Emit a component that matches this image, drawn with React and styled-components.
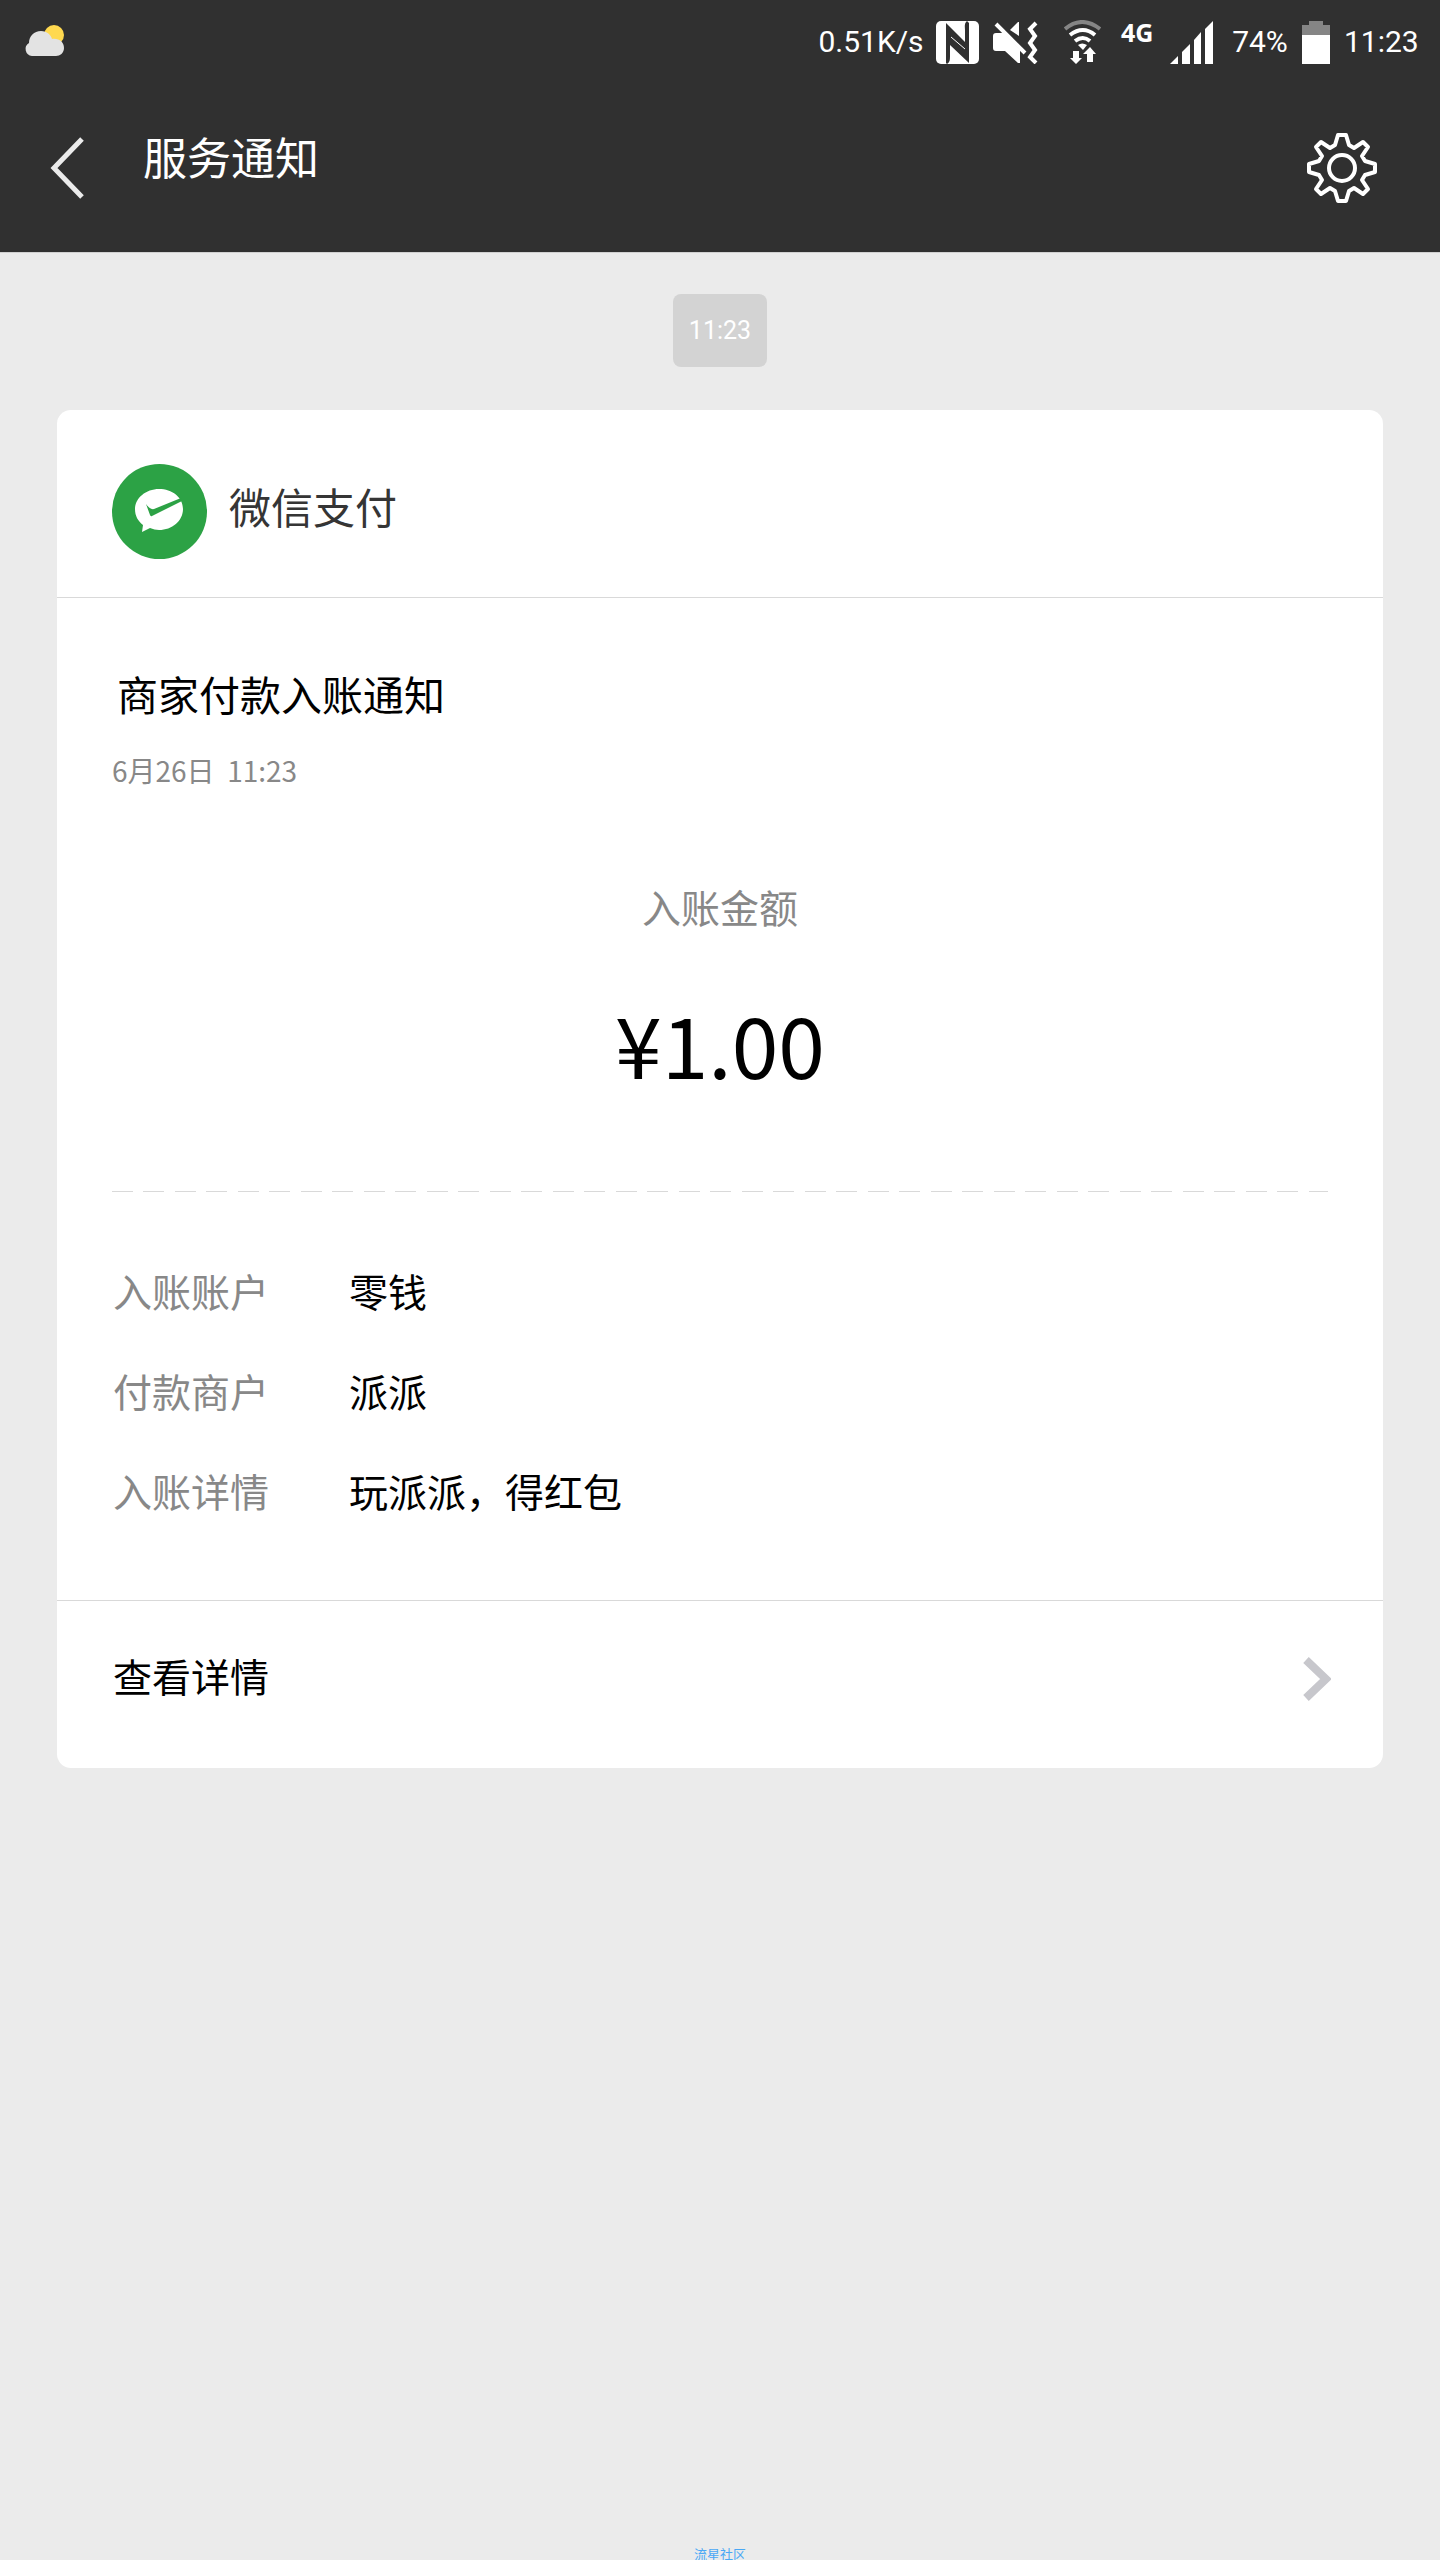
import React from "react";
import styled, { createGlobalStyle } from "styled-components";

const GlobalStyle = createGlobalStyle`
  * {
    box-sizing: border-box;
  }

  body {
    margin: 0;
    background: #ebebeb;
    font-family: "Noto Sans CJK SC", sans-serif;
  }
`;

const Page = styled.div`
  display: flex;
  flex-direction: column;
  min-height: 100vh;
`;

const Header = styled.header`
  background: #303030;
  color: #ffffff;
  border-bottom: 1px solid #d0d0d0;
`;

// Status bar
const StatusBar = styled.div`
  display: flex;
  justify-content: space-between;
  align-items: center;
  height: 84px;
  padding: 0 22px 0 24px;
`;

const StatusGroup = styled.div`
  display: flex;
  align-items: center;
`;

const StatusText = styled.span`
  width: ${({ $width }) => $width}px;
  margin-left: ${({ $gap }) => $gap || 0}px;
  font-family: Roboto, sans-serif;
  font-size: 30px;
  line-height: 44px;
  text-align: center;
  white-space: nowrap;
`;

const NetworkType = styled.span`
  width: 34px;
  height: 44px;
  margin: 0 15px 0 20px;
  font-family: "Noto Sans", sans-serif;
  font-size: 25px;
  font-weight: 700;
  line-height: 24px;
`;

const StatusIcon = styled.svg`
  display: block;
  flex: none;
  margin-left: ${({ $gap }) => $gap || 0}px;
`;

// Navigation bar
const NavBar = styled.div`
  display: flex;
  align-items: center;
  height: 168px;
  padding: 0 60px 0 48px;
`;

const IconButton = styled.button`
  display: flex;
  padding: 0;
  border: none;
  background: none;
  color: #ffffff;
  cursor: pointer;
`;

const PageTitle = styled.h1`
  flex: 1;
  margin: 0;
  padding: 0 0 24px 55px;
  font-size: 44px;
  font-weight: 400;
  line-height: 60px;
`;

// Messages
const Messages = styled.main`
  display: flex;
  flex-direction: column;
  align-items: center;
  padding: 41px 57px;
`;

const TimeChip = styled.time`
  padding: 0 16px;
  border-radius: 8px;
  background: #d3d3d3;
  color: #ffffff;
  font-family: Roboto, sans-serif;
  font-size: 25px;
  line-height: 73px;
  text-align: center;
`;

const Card = styled.article`
  width: 100%;
  margin-top: 43px;
  border-radius: 14px;
  background: #ffffff;
  color: #000000;
`;

const CardHeader = styled.div`
  display: flex;
  align-items: center;
  gap: 22px;
  height: 188px;
  padding: 16px 55px 0;
  border-bottom: 1px solid #d9d9d9;
`;

const Sender = styled.span`
  padding-bottom: 12px;
  color: #353535;
  font-size: 42px;
  line-height: 60px;
`;

const CardBody = styled.div`
  padding: 65px 55px 80px;
`;

const CardTitle = styled.h2`
  margin: 0;
  padding-left: 5px;
  font-size: 41px;
  font-weight: 400;
  line-height: 60px;
`;

const CardDate = styled.time`
  display: block;
  margin-top: 22px;
  color: #888888;
  font-size: 28px;
  line-height: 50px;
  white-space: pre;
`;

const AmountLabel = styled.div`
  margin-top: 81px;
  color: #888888;
  font-size: 39px;
  line-height: 60px;
  text-align: center;
`;

const Amount = styled.div`
  margin-top: 47px;
  font-size: 84px;
  line-height: 120px;
  text-align: center;
`;

const DashedLine = styled.div`
  height: 1px;
  margin-top: 88px;
  background: repeating-linear-gradient(
    to right,
    #d9d9d9 0 21px,
    transparent 21px 31px,
    #d9d9d9 31px 52px,
    transparent 52px 63px
  );
`;

const Details = styled.dl`
  display: grid;
  grid-template-columns: 236px 1fr;
  row-gap: 40px;
  margin: 68px 0 0;
  padding-left: 1px;
  font-size: 39px;
  line-height: 60px;

  dt {
    color: #888888;
  }

  dd {
    margin: 0;
  }
`;

const CardLink = styled.a`
  display: flex;
  justify-content: space-between;
  align-items: center;
  height: 168px;
  padding: 0 52px 12px 56px;
  border-top: 1px solid #d9d9d9;
  color: #000000;
  font-size: 39px;
  line-height: 60px;
  text-decoration: none;

  span {
    padding-bottom: 8px;
  }
`;

const Footer = styled.footer`
  margin-top: auto;
  color: #4aa8f5;
  font-size: 13px;
  line-height: 13px;
  text-align: center;
`;

const WeatherIcon = () => (
  <StatusIcon width="42" height="36" viewBox="0 0 42 36">
    <circle cx="30" cy="11" r="10" fill="#ffd94f" />
    <path
      d="M8 32a7 7 0 0 1-3-13C5 12 10 7 17 7c6 0 10 4 11 8 7-1 12 3 12 9 0 5-4 8-8 8z"
      fill="#e3e3e3"
    />
  </StatusIcon>
);

const NfcIcon = () => (
  <StatusIcon $gap={11} width="43" height="43" viewBox="0 0 43 43">
    <rect width="43" height="43" rx="5" fill="#fff" />
    <path
      d="M10 2l19 19V9c0-4-1-6 2-9l2 2v40L14 24v10c0 5 0 7-3 9l-1-1z"
      fill="#303030"
    />
    <path d="M15 16l14 12" fill="none" stroke="#fff" strokeWidth="1" />
  </StatusIcon>
);

const MuteIcon = () => (
  <StatusIcon $gap={14} width="45" height="43" viewBox="0 0 45 43">
    <path d="M0 15q0-3 3-3h7l17 17v13h-2L12 30H3q-3 0-3-3zM26 1v14l-9-6 8-8z" fill="#fff" />
    <path d="M3 3l29 29" fill="none" stroke="#fff" strokeWidth="4" />
    <path d="M43 2l-6 6 5 7-5 7 5 7-5 7 6 6" fill="none" stroke="#fff" strokeWidth="4" />
  </StatusIcon>
);

const WifiIcon = () => (
  <StatusIcon $gap={26} width="37" height="44" viewBox="0 0 37 44">
    <g fill="none" stroke="#fff" strokeWidth="4">
      <path d="M1 9q17-14 35 0" stroke="#858585" />
      <path d="M6 15q13-10 25 0" />
      <path d="M11 21q8-6 15 0" />
    </g>
    <path d="M14 25q4-3 9 0l-4 5z" fill="#fff" />
    <path d="M9 31h6v7h3l-6 6-6-6h3zM23 42h6v-8h3l-6-7-7 7h4z" fill="#fff" />
  </StatusIcon>
);

const SignalIcon = () => (
  <StatusIcon width="43" height="43" viewBox="0 0 43 43" fill="#fff">
    <path d="M0 43l8-8v8zM12 43V31l8-8v20zM24 43V19l7-8v32zM35 43V8l8-8v43z" />
  </StatusIcon>
);

const BatteryIcon = () => (
  <StatusIcon $gap={11} width="28" height="43" viewBox="0 0 28 43">
    <path d="M0 14V4h7V0h14v4h7v10z" fill="#858585" />
    <path d="M0 14h28v29H0z" fill="#fff" />
  </StatusIcon>
);

const BackIcon = () => (
  <svg width="40" height="64" viewBox="0 0 40 64">
    <path d="M34 3L6 32l28 29" fill="none" stroke="#ebebeb" strokeWidth="5" />
  </svg>
);

const GearIcon = () => (
  <svg
    width="76"
    height="76"
    viewBox="-38 -38 76 76"
    fill="none"
    stroke="#fff"
    strokeWidth="4"
    strokeLinejoin="round"
  >
    <circle r="13" />
    <path d="M-4-33H4L7-23 12-20 21-26 26-21 20-12 23-7 33-4V4L23 7 20 12 26 21 21 26 12 20 7 23 4 33H-4L-7 23-12 20-21 26-26 21-20 12-23 7-33 4V-4L-23-7-20-12-26-21-21-26-12-20-7-23z" />
  </svg>
);

const PayLogo = () => (
  <svg width="95" height="95" viewBox="0 0 95 95">
    <circle cx="47.5" cy="47.5" r="47.5" fill="#2ca245" />
    <path
      d="M47 25c-13 0-24 9-24 20 0 7 3 12 8 16l-1 7 8-4c3 1 6 2 9 2 13 0 24-9 24-21S60 25 47 25z"
      fill="#fff"
    />
    <path d="M34 40q4 6 8 5l27-11 1 3-30 15q-1 1-2-1z" fill="#2ca245" />
  </svg>
);

const ChevronIcon = () => (
  <svg width="28" height="44" viewBox="0 0 28 44">
    <path d="M3 3l20 19L3 41" fill="none" stroke="#c7c7cc" strokeWidth="8" />
  </svg>
);

const details = [
  { label: "入账账户", value: "零钱" },
  { label: "付款商户", value: "派派" },
  { label: "入账详情", value: "玩派派，得红包" },
];

const App = () => {
  return (
    <Page>
      <GlobalStyle />
      <Header>
        <StatusBar>
          <WeatherIcon />
          <StatusGroup>
            <StatusText $width={108}>0.51K/s</StatusText>
            <NfcIcon />
            <MuteIcon />
            <WifiIcon />
            <NetworkType>4G</NetworkType>
            <SignalIcon />
            <StatusText $width={62} $gap={16}>74%</StatusText>
            <BatteryIcon />
            <StatusText $width={74} $gap={14}>11:23</StatusText>
          </StatusGroup>
        </StatusBar>
        <NavBar>
          <IconButton aria-label="返回">
            <BackIcon />
          </IconButton>
          <PageTitle>服务通知</PageTitle>
          <IconButton aria-label="设置">
            <GearIcon />
          </IconButton>
        </NavBar>
      </Header>
      <Messages>
        <TimeChip>11:23</TimeChip>
        <Card>
          <CardHeader>
            <PayLogo />
            <Sender>微信支付</Sender>
          </CardHeader>
          <CardBody>
            <CardTitle>商家付款入账通知</CardTitle>
            <CardDate>6月26日  11:23</CardDate>
            <AmountLabel>入账金额</AmountLabel>
            <Amount>¥1.00</Amount>
            <DashedLine />
            <Details>
              {details.map(({ label, value }) => (
                <React.Fragment key={label}>
                  <dt>{label}</dt>
                  <dd>{value}</dd>
                </React.Fragment>
              ))}
            </Details>
          </CardBody>
          <CardLink href="#details">
            <span>查看详情</span>
            <ChevronIcon />
          </CardLink>
        </Card>
      </Messages>
      <Footer>流星社区</Footer>
    </Page>
  );
};

export default App;
